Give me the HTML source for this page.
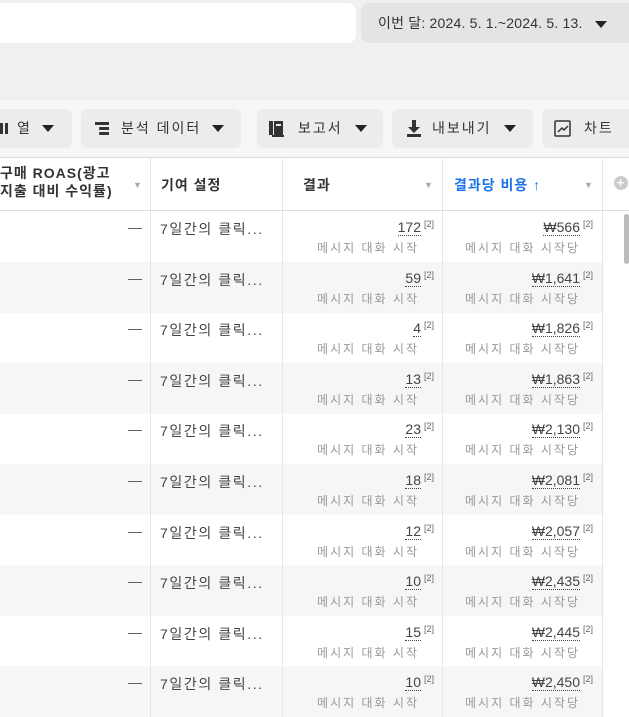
<!DOCTYPE html><html><head><meta charset="utf-8"><style>
*{box-sizing:border-box;margin:0;padding:0}
body{width:629px;height:714px;overflow:hidden;background:#fff;font-family:"Liberation Sans","Noto Sans CJK KR",sans-serif;color:#1c1e21;position:relative}
.top{position:absolute;left:0;top:0;width:629px;height:100px;background:#f0f0f0}
.search{position:absolute;left:-10px;top:3px;width:366px;height:40px;background:#fff;border-radius:8px}
.date{position:absolute;left:361px;top:3px;width:280px;height:40px;background:#e4e4e4;border-radius:8px;font-size:14px;line-height:40px;padding-left:17px;color:#333;letter-spacing:0.2px}
.tri{display:inline-block;width:0;height:0;border-left:6px solid transparent;border-right:6px solid transparent;border-top:7px solid #222;vertical-align:middle}
.band{position:absolute;left:0;top:100px;width:629px;height:57px;background:#f7f7f7}
.btn{position:absolute;top:109px;height:39px;background:#ececec;border-radius:6px;font-size:14px;line-height:39px;color:#333;white-space:nowrap}
.lbl{position:absolute;top:0;letter-spacing:2px}
.btn .tri{position:absolute;top:16px}
.ic{position:absolute}
.hdr{position:absolute;top:157px;left:0;width:629px;height:54px;border-top:1px solid #ddd;border-bottom:1px solid #ddd;background:#fff;font-size:14px;font-weight:bold;color:#333;letter-spacing:1px}
.vl{position:absolute;width:1px;background:#e6e6e6;top:157px;height:560px}
.row{position:absolute;left:0;width:602px;height:51px;font-size:14px;color:#444}
.row.g{background:#f5f6f7}
.dash{position:absolute;left:128px;top:8px;color:#555}
.attr{position:absolute;left:160px;top:8px;color:#444;letter-spacing:1.6px}
.num{position:absolute;top:8px;right:0;text-align:right}
.num u{text-decoration:none;border-bottom:1px dotted #444}
.sup{font-size:9px;vertical-align:top;margin-left:3px;color:#666}
.sub{position:absolute;top:28px;font-size:12px;color:#999;text-align:right;letter-spacing:2px}
.sd{font-size:9px;color:#aaa;position:absolute}
</style></head><body>
<div class="top"><div class="search"></div><div class="date">이번 달: 2024. 5. 1.~2024. 5. 13. <span class="tri" style="margin-left:8px"></span></div></div>
<div class="band"></div>
<div class="btn" style="left:-10px;width:82px"><span class="ic" style="left:10px;top:14px;width:8px;height:11px;border-left:3px solid #333;border-right:3px solid #333"></span><span class="lbl" style="left:27px">열</span><span class="tri" style="left:52px"></span></div>
<div class="btn" style="left:81px;width:160px"><span class="ic" style="left:14px;top:13px;width:14px;height:13px;background:linear-gradient(#333 0 3px,transparent 3px 5px,#333 5px 8px,transparent 8px 10px,#333 10px);clip-path:polygon(0 0,100% 0,100% 100%,30% 100%,30% 24%,0 24%)"></span><span class="lbl" style="left:40px">분석 데이터</span><span class="tri" style="left:131px"></span></div>
<div class="btn" style="left:257px;width:126px"><svg class="ic" style="left:12px;top:12px" width="16" height="16" viewBox="0 0 16 16"><rect x="0" y="0" width="4" height="14" fill="#333"/><rect x="5" y="0" width="9" height="14" fill="#333"/><rect x="7" y="3" width="5" height="2" fill="#ececec"/><rect x="3" y="14" width="12" height="2" fill="#333"/></svg><span class="lbl" style="left:41px">보고서</span><span class="tri" style="left:98px"></span></div>
<div class="btn" style="left:392px;width:141px"><svg class="ic" style="left:15px;top:11px" width="14" height="17" viewBox="0 0 14 17"><path d="M5 0h4v7h4l-6 6-6-6h4z" fill="#333"/><rect x="0" y="14" width="14" height="3" fill="#333"/></svg><span class="lbl" style="left:40px">내보내기</span><span class="tri" style="left:112px"></span></div>
<div class="btn" style="left:542px;width:100px"><svg class="ic" style="left:12px;top:11px" width="17" height="17" viewBox="0 0 17 17"><rect x="1" y="1" width="15" height="15" fill="none" stroke="#333" stroke-width="1.5" rx="1"/><path d="M4 12l4-4 2 2 4-4" fill="none" stroke="#333" stroke-width="1.5"/></svg><span class="lbl" style="left:42px">차트</span></div>
<div class="hdr">
<div style="position:absolute;left:0;top:6px;line-height:18px">구매 ROAS(광고<br>지출 대비 수익률)</div>
<span class="sd" style="left:133px;top:22px">▼</span>
<div style="position:absolute;left:161px;top:17px">기여 설정</div>
<div style="position:absolute;left:303px;top:17px">결과</div>
<span class="sd" style="left:424px;top:22px">▼</span>
<div style="position:absolute;left:454px;top:17px;color:#1a73e8">결과당 비용 ↑</div>
<span class="sd" style="left:584px;top:22px">▼</span>
<div style="position:absolute;left:614px;top:18px;width:14px;height:14px;border-radius:50%;background:#ccc;color:#fff;font-size:13px;line-height:13px;text-align:center">+</div>
</div>
<div id="rows"></div>
<div class="vl" style="left:150px"></div><div class="vl" style="left:282px"></div><div class="vl" style="left:442px"></div><div class="vl" style="left:602px"></div>
<div style="position:absolute;left:624px;top:214px;width:5px;height:50px;background:#bbb;border-radius:3px"></div>
<script>
var r=[172,59,4,13,23,18,12,10,15,10],c=["566","1,641","1,826","1,863","2,130","2,081","2,057","2,435","2,445","2,450"],h="";
for(var i=0;i<10;i++){var y=211+i*50.6;h+='<div class="row'+(i%2?' g':'')+'" style="top:'+y+'px"><span class="dash">—</span><span class="attr">7일간의 클릭...</span>'+
'<div class="num" style="right:168px"><u>'+r[i]+'</u><span class="sup">[2]</span></div><div class="sub" style="right:183px">메시지 대화 시작</div>'+
'<div class="num" style="right:9px"><u>₩'+c[i]+'</u><span class="sup">[2]</span></div><div class="sub" style="right:22px">메시지 대화 시작당</div></div>'}
document.getElementById('rows').innerHTML=h;
</script>
</body></html>
